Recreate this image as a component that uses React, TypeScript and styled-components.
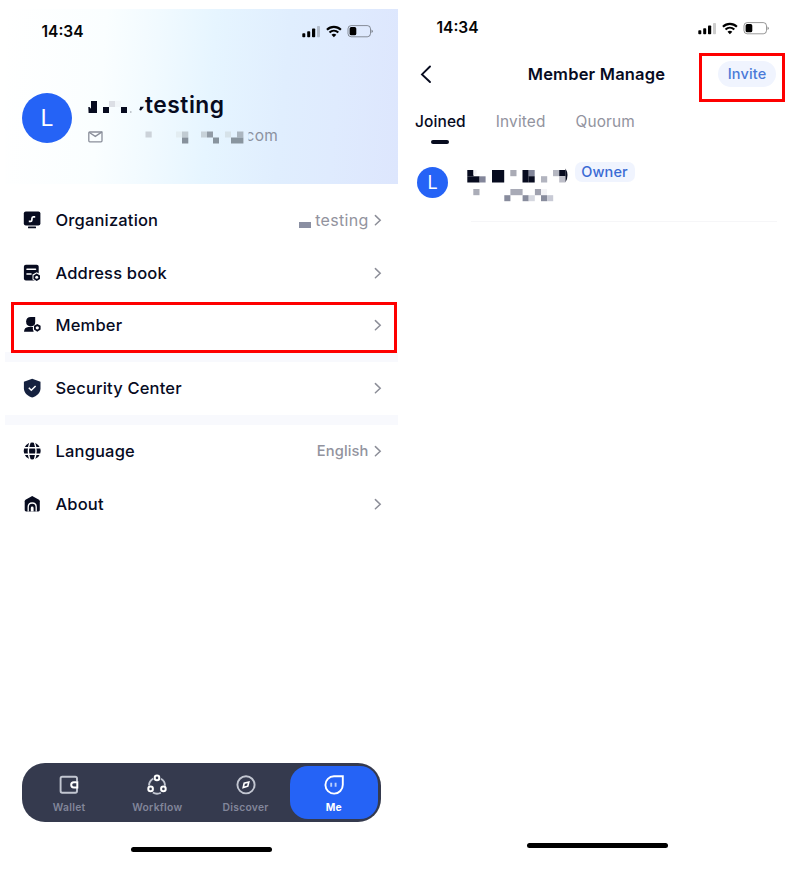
import React from "react";
import styled, { createGlobalStyle } from "styled-components";

const ink = "#070b1f";
const muted = "#92939e";
const blue = "#2563f6";

const GlobalStyle = createGlobalStyle`
  * { box-sizing: border-box; }
  body { margin: 0; background: #fff; font-family: Inter, "Liberation Sans", sans-serif; }
  svg { display: block; flex: none; overflow: visible; }
`;

const Page = styled.div`
  display: flex;
  width: 801px;
  height: 871px;
  overflow: hidden;
  background: #fff;
`;

const Phone = styled.section<{ $w: number; $left: number; $top: number }>`
  position: relative;
  display: flex;
  flex-direction: column;
  flex: none;
  width: ${(p) => p.$w}px;
  height: ${(p) => 871 - p.$top}px;
  margin-left: ${(p) => p.$left}px;
  margin-top: ${(p) => p.$top}px;
`;

const Label = styled.span<{ $size: number; $weight?: number; $color?: string; $track?: number }>`
  font-size: ${(p) => p.$size}px;
  font-weight: ${(p) => p.$weight ?? 500};
  color: ${(p) => p.$color ?? ink};
  letter-spacing: ${(p) => p.$track ?? 0}px;
  line-height: 20px;
  white-space: nowrap;
`;

/* status bar */
const StatusRow = styled.div<{ $left: number; $right: number }>`
  display: flex;
  align-items: center;
  justify-content: space-between;
  height: 20px;
  padding: 0 ${(p) => p.$right}px 0 ${(p) => p.$left}px;
`;

const StatusBar = ({ left, right }: { left: number; right: number }) => (
  <StatusRow $left={left} $right={right}>
    <Label $size={15.5} $weight={600} $color="#050505">14:34</Label>
    <svg width="71" height="13" viewBox="0 0 71 13">
      <rect x="0.3" y="8.3" width="3" height="3.9" rx="0.8" />
      <rect x="5.2" y="6.2" width="3" height="6" rx="0.8" />
      <rect x="10" y="3.4" width="3.2" height="8.8" rx="0.8" />
      <rect x="15" y="1" width="3" height="11.2" rx="0.8" opacity="0.2" />
      <g fill="none" stroke="#000" strokeWidth="2.1">
        <path d="M24.9 4.8 C28.9 0.9 34.9 0.9 38.9 4.8" />
        <path d="M27.5 7.6 C30.1 5.1 33.7 5.1 36.3 7.6" />
      </g>
      <path d="M29.5 9.7 Q31.9 7.8 34.3 9.7 L31.9 12.2 Z" />
      <rect x="46" y="0.6" width="22.5" height="11.2" rx="3.2" fill="none" stroke="#000" strokeOpacity="0.4" />
      <rect x="47.6" y="2.1" width="6.7" height="8.2" rx="1.6" />
      <path d="M69.5 4.5 Q70.8 5 70.8 6.2 Q70.8 7.4 69.5 7.9 Z" opacity="0.45" />
    </svg>
  </StatusRow>
);

/* profile header */
const Hero = styled.header`
  height: 175px;
  padding-top: 12.5px;
  background: linear-gradient(95deg, #ffffff 0%, #fafeff 25%, #f1faff 38%, #e6f5ff 52%, #e0eefe 70%, #dfebfe 83%, #dde6fd 100%);
`;

const Profile = styled.div`
  display: flex;
  gap: 16px;
  padding: 51.5px 0 0 17px;
`;

const Avatar = styled.div<{ $size: number; $font: number }>`
  display: flex;
  flex: none;
  align-items: center;
  justify-content: center;
  width: ${(p) => p.$size}px;
  height: ${(p) => p.$size}px;
  border-radius: 50%;
  background: ${blue};
  color: #fff;
  font-size: ${(p) => p.$font}px;
`;

const Identity = styled.div`
  display: flex;
  flex-direction: column;
`;

const Line = styled.div<{ $h: number }>`
  display: flex;
  align-items: center;
  height: ${(p) => p.$h}px;
`;

const ClippedLabel = styled(Label)<{ $cut: number }>`
  clip-path: inset(0 0 0 ${(p) => p.$cut}px);
`;

/* settings list */
const Settings = styled.main`
  padding-top: 10px;
`;

const Row = styled.div`
  display: flex;
  align-items: center;
  height: 52.5px;
  padding: 0 16px 0 18px;
`;

const RowName = styled(Label)`
  flex: 1;
  margin-left: 14.5px;
`;

const RowValue = styled.div`
  display: flex;
  align-items: center;
  gap: 4px;
  margin-right: 5.5px;
`;

const Band = styled.div<{ $h: number }>`
  height: ${(p) => p.$h}px;
  background: #f8f9fd;
`;

const Chevron = () => (
  <svg width="8" height="12" viewBox="0 0 8 12" fill="none" stroke="#8c8e98" strokeWidth="1.5" strokeLinecap="round">
    <path d="M1.4 1.6 L6.2 6.2 L1.4 10.8" />
  </svg>
);

const RowIcon = ({ children }: { children: React.ReactNode }) => (
  <svg width="18" height="18" viewBox="0 0 18 18" fill={ink}>{children}</svg>
);

const OrgIcon = () => (
  <RowIcon>
    <rect x="0.8" y="0.6" width="16.6" height="13.8" rx="2" />
    <rect x="5" y="15.4" width="8" height="1.8" rx="0.5" />
    <path d="M5.8 10.3 H7.6 Q8.8 10.3 8.9 8.9 V7.7 Q9 6 10.3 5.8 H12.2" fill="none" stroke="#fff" strokeWidth="1.7" />
  </RowIcon>
);

const BookIcon = () => (
  <RowIcon>
    <rect x="0.9" y="0.8" width="14.8" height="15.8" rx="2" />
    <path d="M4 5.3 H12.5 M4 10 H8" stroke="#fff" strokeWidth="1.6" strokeLinecap="round" />
    <path d="M13.7 8.2 L17.8 10.6 V15.5 L13.7 17.9 L9.5 15.5 V10.6 Z" fill="#fff" />
    <path d="M13.7 9.5 L17 11.4 V15 L13.7 17 L10.5 15 V11.4 Z" />
    <circle cx="13.7" cy="13.3" r="1.5" fill="#fff" />
  </RowIcon>
);

const MemberIcon = () => (
  <RowIcon>
    <path d="M7.8 0.9 H12.2 V6 Q12.2 10.4 7.8 10.4 Q3.1 10.4 3.1 5.6 Q3.1 0.9 7.8 0.9 Z" />
    <path d="M1 15.8 Q1.3 11.4 5.3 11.1 H10 Q9.2 13.5 10.7 15.8 Z" />
    <path d="M14.3 8 L17.6 9.8 V13.4 L14.3 15.7 L11 13.4 V9.8 Z" />
    <circle cx="14.3" cy="11.8" r="1.6" fill="#fff" />
  </RowIcon>
);

const ShieldIcon = () => (
  <RowIcon>
    <path d="M9.2 -0.3 L17.5 2.7 V9.3 C17.5 14 13.5 17.4 9.2 18.6 C4.9 17.4 0.9 14 0.9 9.3 V2.7 Z" fill="#15213f" />
    <path d="M5.8 8.8 L8.3 11.3 L12.6 7" fill="none" stroke="#fff" strokeWidth="1.5" />
  </RowIcon>
);

const GlobeIcon = () => (
  <RowIcon>
    <circle cx="9.2" cy="9" r="8.5" />
    <g fill="none" stroke="#fff" strokeWidth="1.4">
      <path d="M0.5 5.7 H18 M0.5 12.2 H18" />
      <path d="M7.1 0 Q3.6 9 7.1 18 M11.3 0 Q14.8 9 11.3 18" />
    </g>
  </RowIcon>
);

const HomeIcon = () => (
  <RowIcon>
    <path d="M9.2 0.9 L16 4.7 Q16.8 5.2 16.8 6.2 V15.1 Q16.8 16.4 15.4 16.4 H3.1 Q1.7 16.4 1.7 15.1 V6.2 Q1.7 5.2 2.5 4.7 Z" />
    <path d="M5.2 16.5 V12 Q5.2 8 9.2 8 Q13.2 8 13.2 12 V16.5" fill="none" stroke="#fff" strokeWidth="1.3" />
    <path d="M7.8 16.5 V12.9 Q7.8 11.5 9.2 11.5 Q10.6 11.5 10.6 12.9 V16.5 Z" fill="#fff" />
  </RowIcon>
);

const SettingRow = ({ icon, name, value }: { icon: React.ReactNode; name: string; value?: React.ReactNode }) => (
  <Row>
    {icon}
    <RowName $size={16.5} $weight={450} $track={0.17}>{name}</RowName>
    {value && <RowValue>{value}</RowValue>}
    <Chevron />
  </Row>
);

/* tab bar */
const NavBar = styled.nav`
  display: flex;
  width: 359px;
  height: 59px;
  margin: auto 0 25px 17px;
  padding: 3px;
  border-radius: 23px;
  background: #353a4e;
`;

const NavItem = styled.div<{ $active?: boolean }>`
  display: flex;
  flex: 1;
  flex-direction: column;
  align-items: center;
  gap: 1px;
  height: 53px;
  padding-top: 8px;
  border-radius: 18px;
  background: ${(p) => (p.$active ? blue : "transparent")};
`;

const NavIcon = ({ children }: { children: React.ReactNode }) => (
  <svg width="22" height="22" viewBox="0 0 22 22" fill="none" stroke="#c2c6d1" strokeWidth="1.9">{children}</svg>
);

const HomeBar = styled.div<{ $left: number; $bottom: number; $top?: string }>`
  width: 141px;
  height: 5px;
  margin: ${(p) => p.$top ?? "0"} 0 ${(p) => p.$bottom}px ${(p) => p.$left}px;
  border-radius: 3px;
  background: #000;
`;

const Highlight = styled.div<{ $x: number; $y: number; $w: number; $h: number }>`
  position: absolute;
  left: ${(p) => p.$x}px;
  top: ${(p) => p.$y}px;
  width: ${(p) => p.$w}px;
  height: ${(p) => p.$h}px;
  border: 3px solid #fe0000;
`;

/* member screen */
const TitleBar = styled.div`
  display: flex;
  align-items: center;
  height: 26px;
  margin-top: 23px;
  padding: 0 25px 0 20px;
`;

const Title = styled.div`
  flex: 1;
  padding-left: 43px;
  text-align: center;
`;

const Pill = styled.div<{ $w: number; $h: number; $r: number }>`
  display: flex;
  align-items: center;
  justify-content: center;
  width: ${(p) => p.$w}px;
  height: ${(p) => p.$h}px;
  border-radius: ${(p) => p.$r}px;
  background: #f0f4fe;
`;

const Tabs = styled.div`
  display: flex;
  gap: 30px;
  margin-top: 25px;
  padding-left: 15px;
`;

const Tab = styled.div`
  display: flex;
  flex-direction: column;
  align-items: center;
  gap: 8px;
  height: 32px;
`;

const TabMark = styled.div`
  width: 18px;
  height: 4px;
  border-radius: 2px;
  background: ${ink};
`;

const MemberRow = styled.div`
  display: flex;
  height: 59px;
  margin-top: 18px;
  padding-left: 17px;
`;

const MemberAvatar = styled.div`
  padding-top: 5px;
`;

const MemberInfo = styled.div`
  display: flex;
  gap: 7px;
  width: 306px;
  margin-left: 18.5px;
`;

const Divider = styled.div`
  width: 306px;
  height: 1px;
  margin-left: 71px;
  background: #f6f6f8;
`;

type Block = [number, number, number, number, string];
const Mosaic = ({ w, h, blocks, children }: { w: number; h: number; blocks: Block[]; children?: React.ReactNode }) => (
  <svg width={w} height={h} viewBox={`0 0 ${w} ${h}`}>
    {blocks.map(([x, y, bw, bh, fill], i) => (
      <rect key={i} x={x} y={y} width={bw} height={bh} fill={fill} />
    ))}
    {children}
  </svg>
);

export default function App() {
  return (
    <Page>
      <GlobalStyle />
      <Phone $w={393} $left={5} $top={9}>
        <Hero>
          <StatusBar left={36.5} right={25.5} />
          <Profile>
            <Avatar $size={50} $font={23}>L</Avatar>
            <Identity>
              <Line $h={24}>
                <Mosaic
                  w={57}
                  h={24}
                  blocks={[
                    [3, 8, 6, 12, ink],
                    [15, 14, 6, 6, ink],
                    [21, 8, 6, 6, "#dcdfe5"],
                    [27, 8, 6, 6, "#f1f6f9"],
                    [33, 14, 6, 6, ink],
                    [42, 18.5, 1.5, 1, "#8d929c"],
                  ]}
                >
                  <path d="M0.3 14 H1.5 L3.2 16 V20 H0.6 Z M51.3 17 L52.3 13.8 H56 L53 17.5 Z" fill={ink} />
                </Mosaic>
                <Label $size={22.8} $weight={580} $track={0.5}>testing</Label>
              </Line>
              <Line $h={37}>
                <Mosaic
                  w={157.5}
                  h={20}
                  blocks={[
                    [57.5, 5.5, 6.2, 6, "#ccd2d9"],
                    [88, 5.5, 6, 6, "#e3edf2"],
                    [94, 5.5, 6.3, 6, "#c1cbd2"],
                    [94, 11.5, 6.3, 6, "#87919c"],
                    [113, 5.5, 6, 6, "#c7d2d9"],
                    [119, 5.5, 6, 6, "#929ca6"],
                    [125, 11.5, 6, 6, "#88949e"],
                    [137, 5.5, 6, 6, "#d6e2e9"],
                    [149, 5.5, 6.4, 6, "#abb6c0"],
                    [143, 11.5, 12.4, 6, "#89959f"],
                  ]}
                >
                  <g fill="none" stroke="#8a8f9b" strokeWidth="1.3">
                    <rect x="0.8" y="6" width="13.2" height="9.8" rx="1" />
                    <path d="M1 6.2 L7.3 10.4 L14.4 5.6" />
                  </g>
                </Mosaic>
                <ClippedLabel $size={15.5} $weight={400} $color="#8c929f" $track={0.3} $cut={3}>com</ClippedLabel>
              </Line>
            </Identity>
          </Profile>
        </Hero>

        <Settings>
          <SettingRow
            icon={<OrgIcon />}
            name="Organization"
            value={
              <>
                <Mosaic w={12} h={8} blocks={[[0, 6, 12, 6, "#8a8fa2"]]} />
                <Label $size={16} $weight={400} $color={muted} $track={0.3}>testing</Label>
              </>
            }
          />
          <SettingRow icon={<BookIcon />} name="Address book" />
          <SettingRow icon={<MemberIcon />} name="Member" />
          <Band $h={10.5} />
          <SettingRow icon={<ShieldIcon />} name="Security Center" />
          <Band $h={10.5} />
          <SettingRow
            icon={<GlobeIcon />}
            name="Language"
            value={<Label $size={14.7} $weight={450} $color={muted} $track={0.1}>English</Label>}
          />
          <SettingRow icon={<HomeIcon />} name="About" />
        </Settings>

        <NavBar>
          <NavItem>
            <NavIcon>
              <path d="M19 7.5 V4.5 Q19 2.8 17.3 2.8 H4.2 Q2.6 2.8 2.6 4.5 V17 Q2.6 18.7 4.2 18.7 H17.3 Q19 18.7 19 17 V14" />
              <path d="M19.3 8.2 H15.8 A2.6 2.6 0 0 0 15.8 13.4 H19.3 Z" stroke="#fff" strokeWidth="2" />
            </NavIcon>
            <Label $size={10.3} $weight={600} $color="#82869a" $track={0.3}>Wallet</Label>
          </NavItem>
          <NavItem>
            <NavIcon>
              <circle cx="11" cy="11.7" r="8" strokeDasharray="8.4 8.355" strokeDashoffset="-4.2" transform="rotate(-90 11 11.7)" />
              <g stroke="#fff" strokeWidth="2" fill="#353a4e">
                <circle cx="11" cy="3.9" r="2.3" />
                <circle cx="4.6" cy="14.9" r="2.3" />
                <circle cx="17.4" cy="14.9" r="2.3" />
              </g>
            </NavIcon>
            <Label $size={10.3} $weight={600} $color="#82869a" $track={0.3}>Workflow</Label>
          </NavItem>
          <NavItem>
            <NavIcon>
              <circle cx="11" cy="10.8" r="8.6" />
              <path d="M13.8 8 L12.8 12.2 L8.2 13.6 L9.2 9.2 Z" stroke="#fff" strokeWidth="1.6" />
            </NavIcon>
            <Label $size={10.3} $weight={600} $color="#82869a" $track={0.3}>Discover</Label>
          </NavItem>
          <NavItem $active>
            <NavIcon>
              <path d="M11 2.2 H19.8 V10.8 A8.7 8.7 0 1 1 11 2.2 Z" stroke="#fff" />
              <path d="M8.2 8.8 V12.8 M12.6 8.8 V12.8" stroke="#b9cdfc" />
            </NavIcon>
            <Label $size={10.3} $weight={700} $color="#fff" $track={0.2}>Me</Label>
          </NavItem>
        </NavBar>
        <HomeBar $left={126} $bottom={19} />
        <Highlight $x={6} $y={293} $w={386} $h={51} />
      </Phone>

      <Phone $w={401} $left={2} $top={18}>
        <StatusBar left={36.5} right={32.5} />
        <TitleBar>
          <svg width="12" height="18" viewBox="0 0 12 18" fill="none" stroke={ink} strokeWidth="1.9" strokeLinecap="round">
            <path d="M10 1.5 L2 9.4 L10 17" />
          </svg>
          <Title>
            <Label $size={16.5} $weight={580} $track={0.2}>Member Manage</Label>
          </Title>
          <Pill $w={58} $h={26} $r={13}>
            <Label $size={14.5} $weight={450} $color="#4a7ad8" $track={0.15}>Invite</Label>
          </Pill>
        </TitleBar>
        <Tabs>
          <Tab>
            <Label $size={15.5} $weight={550} $track={0.1}>Joined</Label>
            <TabMark />
          </Tab>
          <Tab>
            <Label $size={15.4} $weight={400} $color={muted} $track={0.15}>Invited</Label>
          </Tab>
          <Tab>
            <Label $size={15.4} $weight={400} $color={muted} $track={0.15}>Quorum</Label>
          </Tab>
        </Tabs>
        <MemberRow>
          <MemberAvatar>
            <Avatar $size={31} $font={18}>L</Avatar>
          </MemberAvatar>
          <MemberInfo>
            <Mosaic
              w={101}
              h={44}
              blocks={[
                [0.3, 8, 6.2, 6.3, ink],
                [0.3, 14.3, 12.3, 6.2, ink],
                [12.6, 14.3, 6, 6.2, "#83869a"],
                [6.5, 8, 3, 5, "#f2f2f5"],
                [25, 8, 12.2, 12.5, ink],
                [43.3, 8, 6.2, 6.2, "#aaabb5"],
                [55.5, 8, 6.2, 12.5, ink],
                [61.7, 8, 6, 6.2, "#82869a"],
                [61.7, 14.2, 6, 6.3, ink],
                [74, 14.2, 6.2, 6.3, "#b2b4bf"],
                [86, 8, 6.2, 6.2, "#b5b7c1"],
                [92.2, 8, 6.4, 6.2, ink],
                [92.2, 14.2, 6.2, 6.3, "#bdbec8"],
                [6.3, 27, 6.2, 6.2, "#abadb8"],
                [37.3, 33.2, 6.1, 6, "#888c9d"],
                [43.4, 27, 12.2, 6.2, "#a8aab6"],
                [55.6, 33.2, 6.1, 6, "#888c9d"],
                [61.7, 33.2, 6.1, 6, "#d5d7df"],
                [67.9, 27, 6.1, 6.2, "#a0a2af"],
                [74, 27, 6, 6.2, "#f3f3f6"],
                [74, 33.2, 6.1, 6, "#888c9d"],
                [80.1, 33.2, 6.1, 6, "#c8cad5"],
              ]}
            >
              <path d="M98.5 6.5 Q102.6 13 98.5 20.3 Z" fill={ink} />
            </Mosaic>
            <Pill $w={60} $h={20} $r={7}>
              <Label $size={14.5} $color="#3a6bd4" $track={0.1}>Owner</Label>
            </Pill>
          </MemberInfo>
        </MemberRow>
        <Divider />
        <HomeBar $left={126.5} $bottom={23} $top="auto" />
        <Highlight $x={299} $y={35} $w={86} $h={49} />
      </Phone>
    </Page>
  );
}
